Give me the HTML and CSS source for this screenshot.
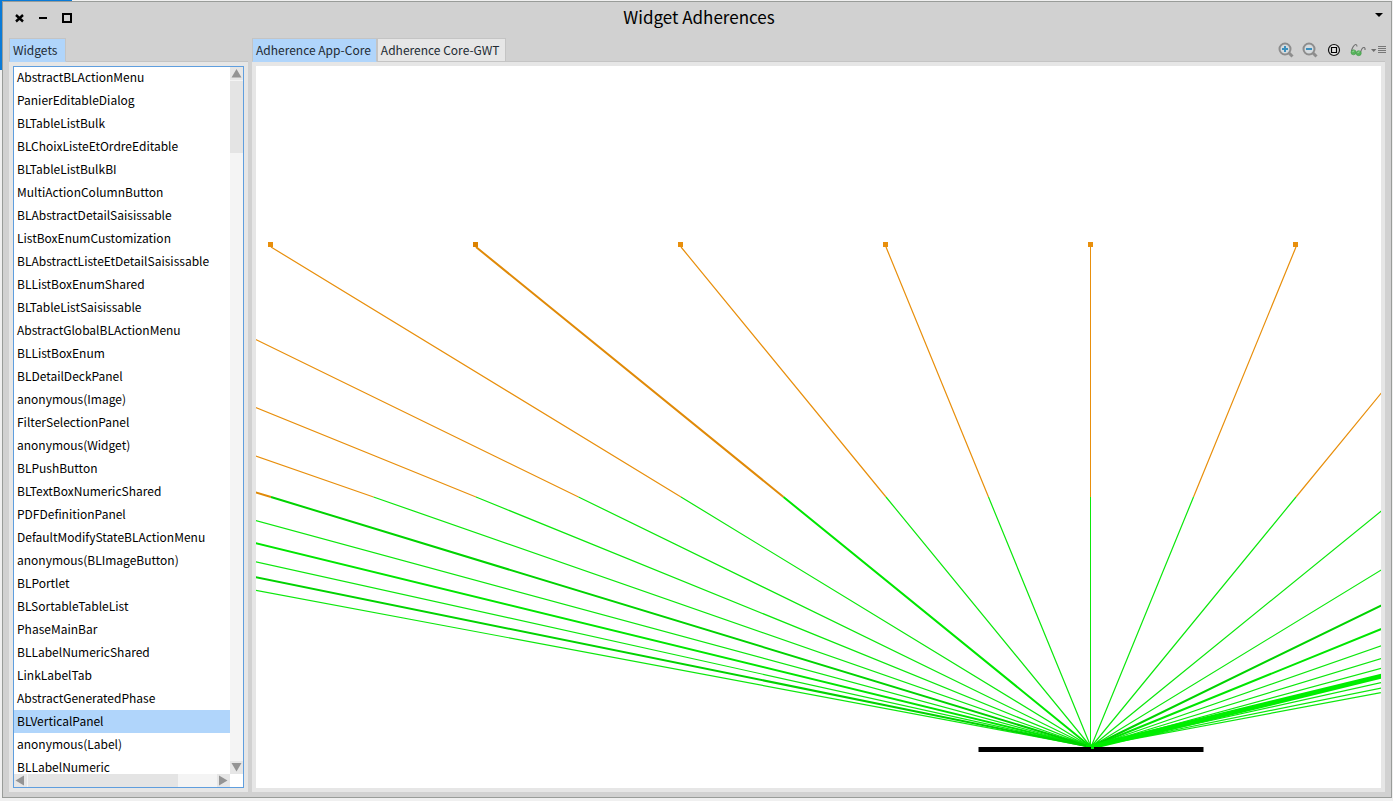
FILE: index.html
```html
<!DOCTYPE html>
<html lang="en">
<head>
<meta charset="utf-8">
<title>Widget Adherences</title>
<link rel="stylesheet" href="styles.css">
</head>
<body>
<div class="desktop-edge"></div>
<main class="window">
  <header class="titlebar">
    <div class="controls">
      <button class="control" aria-label="Close"><svg width="10" height="10" viewBox="0 0 10 10"><path d="M2 2l7 6.500M9 2l-7 6.500" stroke="#000" stroke-width="2.400"/></svg></button>
      <button class="control" aria-label="Minimize"><svg width="10" height="10" viewBox="0 0 10 10"><path d="M1 5h8" stroke="#000" stroke-width="2"/></svg></button>
      <button class="control" aria-label="Maximize"><svg width="10" height="10" viewBox="0 0 10 10"><path d="M1 1h8v8H1z" fill="none" stroke="#000" stroke-width="2"/></svg></button>
    </div>
    <h1 class="title">Widget Adherences</h1>
    <div class="controls controls-end">
      <button class="control" aria-label="Window menu"><svg width="10" height="10" viewBox="0 0 10 10"><path d="M1 2h8L5 6z"/></svg></button>
    </div>
  </header>
  <div class="panes">
    <section class="pane pane-list">
      <div class="tabs"><button class="tab tab-active">Widgets</button></div>
      <div class="pane-body">
        <div class="listbox">
          <ul class="items" role="listbox" aria-label="Widgets">
            <li class="item" role="option">AbstractBLActionMenu</li>
            <li class="item" role="option">PanierEditableDialog</li>
            <li class="item" role="option">BLTableListBulk</li>
            <li class="item" role="option">BLChoixListeEtOrdreEditable</li>
            <li class="item" role="option">BLTableListBulkBI</li>
            <li class="item" role="option">MultiActionColumnButton</li>
            <li class="item" role="option">BLAbstractDetailSaisissable</li>
            <li class="item" role="option">ListBoxEnumCustomization</li>
            <li class="item" role="option">BLAbstractListeEtDetailSaisissable</li>
            <li class="item" role="option">BLListBoxEnumShared</li>
            <li class="item" role="option">BLTableListSaisissable</li>
            <li class="item" role="option">AbstractGlobalBLActionMenu</li>
            <li class="item" role="option">BLListBoxEnum</li>
            <li class="item" role="option">BLDetailDeckPanel</li>
            <li class="item" role="option">anonymous(Image)</li>
            <li class="item" role="option">FilterSelectionPanel</li>
            <li class="item" role="option">anonymous(Widget)</li>
            <li class="item" role="option">BLPushButton</li>
            <li class="item" role="option">BLTextBoxNumericShared</li>
            <li class="item" role="option">PDFDefinitionPanel</li>
            <li class="item" role="option">DefaultModifyStateBLActionMenu</li>
            <li class="item" role="option">anonymous(BLImageButton)</li>
            <li class="item" role="option">BLPortlet</li>
            <li class="item" role="option">BLSortableTableList</li>
            <li class="item" role="option">PhaseMainBar</li>
            <li class="item" role="option">BLLabelNumericShared</li>
            <li class="item" role="option">LinkLabelTab</li>
            <li class="item" role="option">AbstractGeneratedPhase</li>
            <li class="item item-selected" role="option" aria-selected="true">BLVerticalPanel</li>
            <li class="item" role="option">anonymous(Label)</li>
            <li class="item" role="option">BLLabelNumeric</li>
          </ul>
          <div class="scroll scroll-v">
            <button class="arrow" aria-label="Scroll up"><svg width="13" height="13" viewBox="0 0 13 13"><path d="M6.500 2l5 8.500H1.500z"/></svg></button>
            <div class="thumb"></div>
            <button class="arrow arrow-end" aria-label="Scroll down"><svg width="13" height="13" viewBox="0 0 13 13"><path d="M6.500 10.500l5-8.500H1.500z"/></svg></button>
          </div>
          <div class="scroll scroll-h">
            <button class="arrow" aria-label="Scroll left"><svg width="13" height="13" viewBox="0 0 13 13"><path d="M1.500 6.500l8.500-5v10z"/></svg></button>
            <div class="thumb"></div>
            <button class="arrow arrow-end" aria-label="Scroll right"><svg width="13" height="13" viewBox="0 0 13 13"><path d="M10.500 6.500l-8.500-5v10z"/></svg></button>
          </div>
        </div>
      </div>
    </section>
    <section class="pane pane-graph">
      <div class="tabs">
        <button class="tab tab-active">Adherence App-Core</button>
        <button class="tab">Adherence Core-GWT</button>
        <div class="tools">
          <button class="tool" aria-label="Zoom in"><svg width="16" height="16" viewBox="0 0 16 16"><path d="M10.500 10.500l4 4" stroke="#8d8d8d" stroke-width="3"/><circle cx="7" cy="7" r="5.500" fill="#d6dbde" stroke="#8d8d8d" stroke-width="2"/><path d="M4 7h6M7 4v6" stroke="#3b8fbd" stroke-width="2"/></svg></button>
          <button class="tool" aria-label="Zoom out"><svg width="16" height="16" viewBox="0 0 16 16"><path d="M10.500 10.500l4 4" stroke="#8d8d8d" stroke-width="3"/><circle cx="7" cy="7" r="5.500" fill="#d6dbde" stroke="#8d8d8d" stroke-width="2"/><path d="M4 7h6" stroke="#3b8fbd" stroke-width="2"/></svg></button>
          <button class="tool" aria-label="Fit to view"><svg width="16" height="16" viewBox="0 0 16 16"><circle cx="8" cy="8" r="5.500" fill="#e2e2e2" stroke="#111" stroke-width="1.200"/><path d="M5.500 5.500h5v5h-5z" fill="#e2e2e2" stroke="#000" stroke-width="1.200"/></svg></button>
          <button class="tool" aria-label="Inspect"><svg width="16" height="16" viewBox="0 0 16 16"><path d="M1.500 9C2 6.500 4 2.500 5.700 2.500Q7 2.500 7 4.500M10.500 11C11 8.500 12.500 5.500 14 5.500Q15.300 5.500 15 8" fill="none" stroke="#6c6c6c" stroke-width="1.100"/><circle cx="3.500" cy="10.300" r="2.500" fill="#58b45c" stroke="#3e9b45" stroke-width=".6"/><circle cx="8.700" cy="11.200" r="2.500" fill="#58b45c" stroke="#3e9b45" stroke-width=".6"/><path d="M2.300 9.800l2-1M7.500 10.700l2-1" stroke="#9bdc9d"/></svg></button>
          <button class="tool" aria-label="Menu"><svg width="16" height="16" viewBox="0 0 16 16"><path d="M0 7h5.500L2.700 10z" fill="#6e6e6e"/><path d="M7 4.500h8M7 6.500h8M7 8.500h8M7 10.500h8" stroke="#777"/></svg></button>
        </div>
      </div>
      <div class="pane-body">
        <svg class="graph" role="img" aria-label="Adherence graph">
          <g transform="translate(-256 -66)" fill="none">
            <path stroke="#e88f0c" stroke-width="1.200" d="M271 247L681 497M66 247L578.500 497M-139 247L476 497M-344 247L373.500 497M681 247L886 497M886 247L988.500 497M1296 247L1193.500 497M1501 247L1296 497"/>
            <path stroke="#e88f0c" d="M1090.500 247V497"/>
            <path stroke="#e08a08" stroke-width="2" d="M476 247L783.500 497M-549 247L271 497"/>
            <path stroke="#0ce80c" d="M1090.500 497V747"/>
            <g stroke="#0ce80c" stroke-width="1.200">
              <path d="M681 497L1091 747L578.500 497M476 497L1091 747L373.500 497M886 497L1091 747L988.500 497M1193.500 497L1091 747L1296 497"/>
              <path d="M168.500 497L1091 747L-36.500 497M-241.500 497L1091 747L1398.500 497M1501 497L1091 747L1808.500 497M1911 497L1091 747L2013.500 497M2218.500 497L1091 747L2321 497M2423.500 497L1091 747"/>
            </g>
            <path stroke="#00e600" stroke-width="2" d="M783.500 497L1091 747L66 497M1706 497L1091 747"/>
            <path stroke="#00d300" stroke-width="2" d="M271 497L1091 747L-139 497M1603.500 497L1091 747"/>
            <path stroke="#00ee00" stroke-width="5" d="M2116 497L1091 747"/>
            <path stroke="#000" stroke-width="5" d="M978.500 749.500H1203.500"/>
            <path stroke="#00ee00" stroke-width="2" d="M1086 746h10M1091 748h3"/>
            <path fill="#e88f0c" d="M268 242h5v5h-5zM678 242h5v5h-5zM883 242h5v5h-5zM1088 242h5v5h-5zM1293 242h5v5h-5z"/>
            <path fill="#dc8200" d="M473 242h5v5h-5z"/>
          </g>
        </svg>
      </div>
    </section>
  </div>
</main>
</body>
</html>
```
FILE: styles.css
```css
* { box-sizing: border-box; }

body {
  margin: 0;
  height: 100vh;
  padding: 1px 1px 3px 2px;
  background: #f0f0f0;
  font: 12px/22px "Noto Sans CJK SC", "Noto Sans", sans-serif;
  color: #000;
  overflow: hidden;
}

.desktop-edge {
  position: absolute;
  left: 0;
  top: 0;
  width: 72px;
  height: 70px;
  background: #0a7ad6;
}

button {
  border: 0;
  padding: 0;
  background: none;
  font: inherit;
  color: inherit;
}

svg { display: block; }

.window {
  position: relative;
  display: flex;
  flex-direction: column;
  height: 100%;
  border: 1px solid #999c99;
  background: #d1d1d1;
}

.titlebar {
  display: grid;
  grid-template-columns: 1fr auto 1fr;
  align-items: center;
  height: 32px;
  padding: 0 7px 0 11px;
}

.controls { display: flex; gap: 14px; }
.controls-end { justify-content: flex-end; padding-bottom: 4px; }

.title {
  margin: 0;
  padding-bottom: 2px;
  font-size: 17px;
  font-weight: 400;
  line-height: 30px;
}

.panes {
  flex: 1;
  min-height: 0;
  display: flex;
  gap: 4px;
  padding: 4px 6px 5px;
}

.pane {
  display: flex;
  flex-direction: column;
  min-width: 0;
}
.pane-list { flex: 0 0 239px; }
.pane-graph { flex: 1; }

.tabs {
  display: flex;
  height: 24px;
  box-shadow: inset 0 -1px #c4c4c4;
}

.tab {
  height: 24px;
  padding: 0 5px 0 3px;
  border: 1px solid #c4c4c4;
  background: #e6e6e6;
  color: #222a33;
}
.pane-list .tab { padding-right: 8px; }
.tab-active {
  border-bottom-color: #b0d5fb;
  background: #b0d5fb;
}

.tools {
  display: flex;
  align-items: center;
  gap: 8px;
  margin: 0 -2px 0 auto;
}
.tool:last-child { margin-left: -3px; }

.pane-body {
  flex: 1;
  min-height: 0;
  display: flex;
  padding: 4px;
  background: #e6e6e6;
}

.listbox {
  flex: 1;
  display: grid;
  grid-template-columns: 1fr 13px;
  grid-template-rows: 1fr 13px;
  padding: 0 1px 1px;
  background: #fff;
  outline: 1px solid #5f9ede;
  outline-offset: -1px;
}

.items {
  min-height: 0;
  margin: 0;
  padding: 0;
  overflow: hidden;
  list-style: none;
}
.item {
  height: 23px;
  padding-left: 3px;
  white-space: nowrap;
}
.item-selected { background: #b0d5fb; }

.scroll {
  display: flex;
  gap: 1px;
  background: #f4f4f4;
}
.scroll-v { flex-direction: column; padding-top: 1px; }
.arrow { background: #e6e6e6; fill: #949494; }
.thumb { background: #e4e4e4; }
.scroll-v .thumb { height: 72px; }
.scroll-h .thumb { width: 150px; }
.scroll-v .arrow-end { margin-top: auto; }
.scroll-h .arrow-end { margin-left: auto; }

.graph {
  flex: 1;
  min-width: 0;
  width: 100%;
  height: 100%;
  background: #fff;
  overflow: hidden;
}
```
